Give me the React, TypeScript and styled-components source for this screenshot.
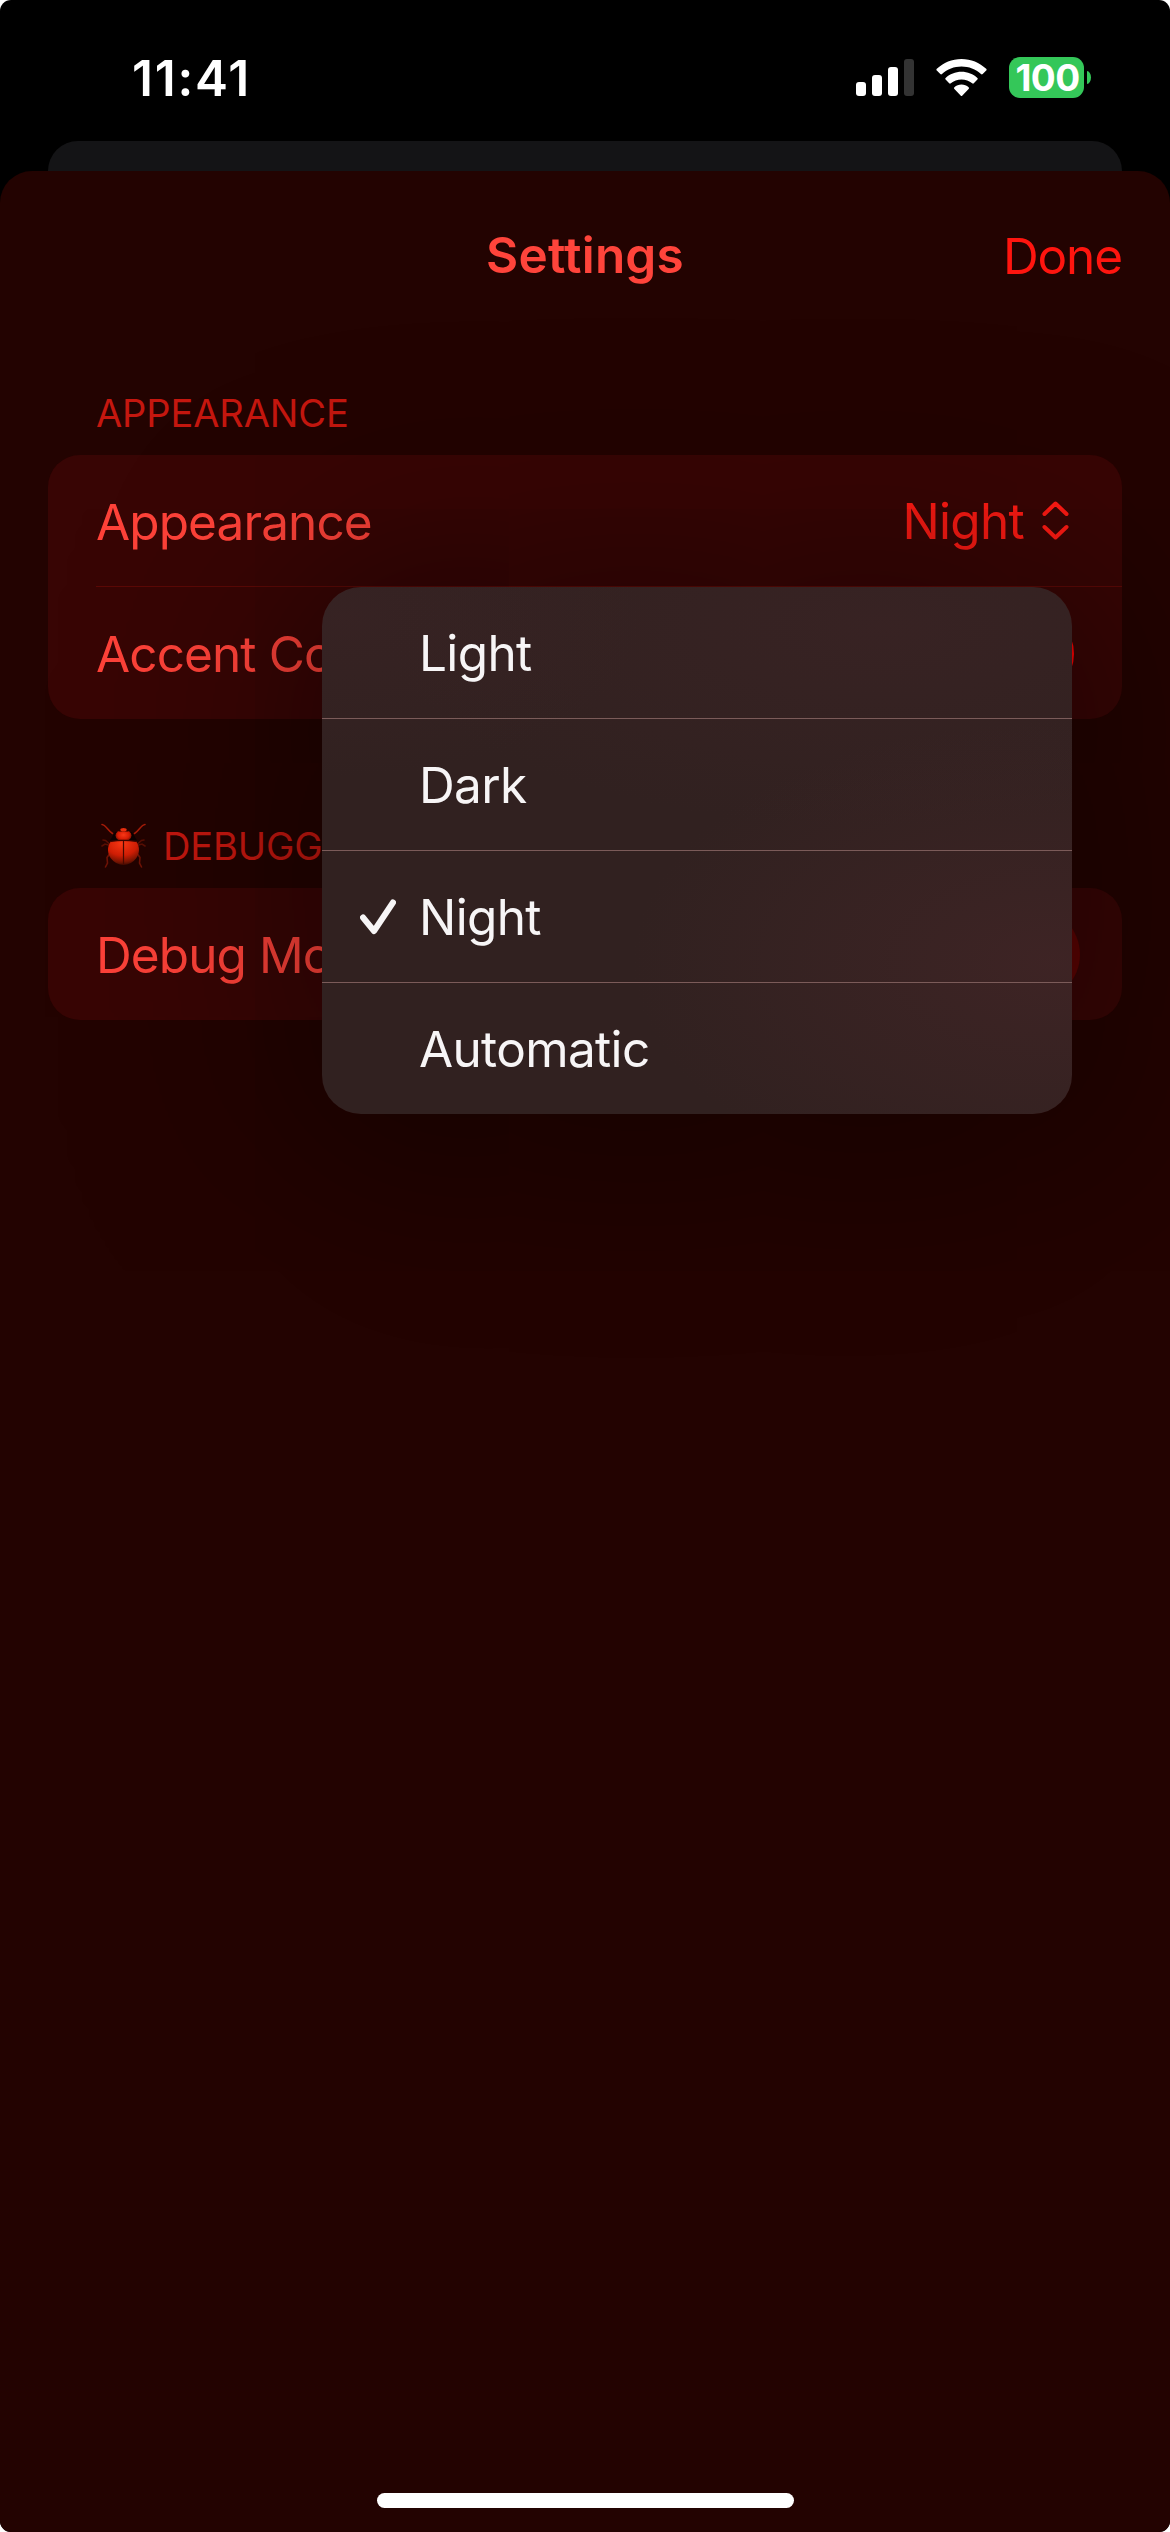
import React from 'react';
import styled, { createGlobalStyle } from 'styled-components';

const GlobalStyle = createGlobalStyle`
  *, *::before, *::after { box-sizing: border-box; }
  html, body { margin: 0; padding: 0; background: #ffffff; }
  body { font-family: Inter, "Liberation Sans", sans-serif; }
`;

const Screen = styled.div`
  position: relative;
  display: flex;
  flex-direction: column;
  width: 1170px;
  height: 2532px;
  overflow: hidden;
  border-radius: 11px;
  background: #000000;
`;

const StatusBar = styled.header`
  display: flex;
  flex: none;
  align-items: flex-start;
  justify-content: space-between;
  height: 141px;
  padding: 57px 79px 0 132px;
  color: #ffffff;
`;

const Clock = styled.time`
  font-size: 49.5px;
  font-weight: 600;
  line-height: 42px;
  letter-spacing: 1.8px;
`;

const StatusIcons = styled.div`
  display: flex;
  align-items: flex-start;
`;

const SignalIcon = styled.svg`
  margin: 2px 22px 0 0;
`;

const WifiIcon = styled.svg`
  margin: 2px 22px 0 0;
`;

const Battery = styled.div`
  display: flex;
  align-items: center;
  justify-content: center;
  width: 75px;
  height: 41px;
  padding-left: 2px;
  border-radius: 11px;
  background: #34c759;
  font-size: 37px;
  font-weight: 700;
  line-height: 41px;
  letter-spacing: -0.6px;
`;

const BatteryCap = styled.div`
  width: 4px;
  height: 13px;
  margin: 14px 0 0 3px;
  border-radius: 0 4px 4px 0 / 0 6.5px 6.5px 0;
  background: #34c759;
`;

const BackSheet = styled.div`
  flex: none;
  height: 30px;
  margin: 0 48px;
  border-radius: 30px 30px 0 0;
  background: #141416;
`;

const Sheet = styled.main`
  display: flex;
  flex: 1;
  flex-direction: column;
  border-radius: 32px 32px 0 0;
  background: #230301;
`;

const NavBar = styled.nav`
  display: grid;
  grid-template-columns: 1fr auto 1fr;
  align-items: center;
  height: 168px;
  padding: 0 48px;
`;

const NavTitle = styled.h1`
  grid-column: 2;
  margin: 0;
  color: #ff443b;
  font-size: 49.5px;
  font-weight: 600;
  line-height: 60px;
  letter-spacing: 0.2px;
`;

const NavButton = styled.button`
  justify-self: end;
  padding: 2px 0 0;
  border: 0;
  background: none;
  color: #ff150f;
  font: 400 49.5px/60px Inter, "Liberation Sans", sans-serif;
  letter-spacing: -1.1px;
`;

const Section = styled.section<{ $gap: number }>`
  display: flex;
  flex-direction: column;
  padding: ${(p) => p.$gap}px 48px 0;
`;

const SectionTitle = styled.h2`
  display: flex;
  align-items: center;
  height: 48px;
  margin: 0 0 18px;
  padding: 0 48px;
  color: #c5170f;
  font-size: 38px;
  font-weight: 400;
  line-height: 48px;
  letter-spacing: -0.1px;
`;

const BeetleIcon = styled.svg`
  flex: none;
  margin: 0 16px 0 5px;
`;

const Card = styled.div`
  overflow: hidden;
  border-radius: 32px;
  background: #380504;
`;

const Row = styled.div`
  display: flex;
  align-items: center;
  justify-content: space-between;
  height: 132px;
  margin-left: 48px;
  padding: 1px 48px 0 0;

  &:not(:last-child) {
    padding-top: 2px;
    border-bottom: 1px solid #5c0906;
  }
`;

const RowLabel = styled.span`
  color: #ff4239;
  font-size: 49.5px;
  line-height: 60px;
  letter-spacing: -0.9px;
`;

const Picker = styled.span`
  display: flex;
  align-items: center;
  gap: 18px;
  margin: -2px 5px 0 0;
  color: #ff1a13;
  font-size: 49.5px;
  line-height: 60px;
  letter-spacing: -0.7px;
`;

const ColorWell = styled.span`
  width: 84px;
  height: 84px;
  border: 9px solid #ff0000;
  border-radius: 50%;
  background: #a00000;
`;

const Toggle = styled.span`
  width: 153px;
  height: 93px;
  margin-right: -6px;
  border-radius: 47px;
  background: #5c0302;
`;

const Menu = styled.ul`
  position: absolute;
  top: 587px;
  left: 322px;
  width: 750px;
  margin: 0;
  padding: 0;
  overflow: hidden;
  list-style: none;
  border-radius: 39px;
  background:
    radial-gradient(ellipse 420px 240px at 730px 375px, rgba(72, 38, 40, 0.55), rgba(72, 38, 40, 0)),
    radial-gradient(ellipse 500px 200px at 560px 40px, rgba(62, 36, 38, 0.5), rgba(62, 36, 38, 0)),
    radial-gradient(ellipse 300px 160px at 20px 30px, rgba(60, 36, 38, 0.5), rgba(60, 36, 38, 0)),
    #312120;
`;

const MenuShadow = styled.div`
  position: absolute;
  top: 587px;
  left: 322px;
  width: 750px;
  height: 527px;
  border-radius: 39px;
  box-shadow: 0 8px 225px 30px rgba(0, 0, 0, 0.48);
`;

const MenuItem = styled.li`
  display: grid;
  grid-template-columns: 36px 1fr;
  column-gap: 23px;
  align-items: center;
  height: 132px;
  padding-left: 38px;
  border-bottom: 1px solid #7b5b59;
  color: #f7f5f6;
  font-size: 49.5px;
  line-height: 60px;
  letter-spacing: -0.65px;

  &:last-child {
    height: 131px;
    border-bottom: 0;
  }
`;

const MenuLabel = styled.span`
  grid-column: 2;
`;

const HomeIndicator = styled.div`
  align-self: center;
  width: 417px;
  height: 15px;
  margin: auto 0 24px;
  border-radius: 8px;
  background: #ffffff;
`;

const Beetle = () => (
  <BeetleIcon width="46" height="46" viewBox="0 0 46 46" fill="none">
    <defs>
      <radialGradient id="shell" cx="0.45" cy="0.12" r="0.9">
        <stop offset="0" stopColor="#ff3a14" />
        <stop offset="0.55" stopColor="#d41e05" />
        <stop offset="0.85" stopColor="#7a1503" />
        <stop offset="1" stopColor="#3a0a02" />
      </radialGradient>
      <radialGradient id="thorax" cx="0.5" cy="0.45" r="0.6">
        <stop offset="0" stopColor="#ff3a18" />
        <stop offset="0.6" stopColor="#dd1d05" />
        <stop offset="1" stopColor="#5a0d02" />
      </radialGradient>
    </defs>
    <g stroke="#a81c09" strokeWidth="1.600" strokeLinecap="round">
      <path d="M1 1.500C5 2 7 8 11.500 10.500M44 1.500C40 2 38 8 33.500 10.500" />
      <path d="M8 20.500 4.500 17.500 2 17M37 20.500 40.500 17.500 43 17" stroke="#5a0f04" />
      <path d="M7.500 22 4 21 1 23M37.500 22 41 21 44 23" stroke="#5a0f04" />
      <path d="M8.500 31 6 34.500 6.500 40 4.500 44M36.500 31 39 34.500 38.500 40 40.500 44" stroke="#701306" />
    </g>
    <path d="M14 9 9 17.500H36L31 9Z" fill="#0c0000" />
    <ellipse cx="22.500" cy="12.500" rx="8" ry="6" fill="url(#thorax)" />
    <path d="M16.500 7.500Q22.500 1 28.500 7.500L27 8.500H18Z" fill="#2a0401" />
    <ellipse cx="22.500" cy="6.800" rx="3.200" ry="1.800" fill="#f0300f" />
    <path d="M10 18.300Q22.500 16.500 35 18.300C39.500 24 38.500 31 35 35.500Q30 42 22.500 42Q15 42 10 35.500C6.500 31 5.500 24 10 18.300Z" fill="url(#shell)" />
    <path d="M22.500 18V42" stroke="#4a0a02" strokeWidth="1.200" />
    <path d="M10 18.300Q22.500 16.500 35 18.300" stroke="#3a0500" strokeWidth="1.200" />
  </BeetleIcon>
);

const Signal = () => (
  <SignalIcon width="58" height="37" viewBox="0 0 58 37" fill="#ffffff">
    <rect x="0" y="23" width="10" height="14" rx="3" />
    <rect x="16" y="16" width="10" height="21" rx="3" />
    <rect x="32" y="8" width="10" height="29" rx="3" />
    <rect x="48" y="0" width="10" height="37" rx="3" fill="#333333" />
  </SignalIcon>
);

const Wifi = () => (
  <WifiIcon width="51" height="37" viewBox="0 0 51 37" fill="#ffffff">
    <path d="M25.500 0C35 0 43.600 3.700 50.200 9.800a1.200 1.200 0 0 1 0 1.700L46.700 15.100a1.200 1.200 0 0 1-1.700 0C39.700 10.300 32.900 7.600 25.500 7.600S11.300 10.300 6 15.100a1.200 1.200 0 0 1-1.700 0L.8 11.500a1.200 1.200 0 0 1 0-1.700C7.400 3.700 16 0 25.500 0Z" />
    <path d="M25.500 12.800c6.100 0 11.700 2.300 15.900 6.100a1.200 1.200 0 0 1 0 1.700l-3.600 3.700a1.200 1.200 0 0 1-1.600 0c-2.900-2.500-6.600-3.900-10.700-3.900s-7.800 1.400-10.700 3.900a1.200 1.200 0 0 1-1.600 0l-3.600-3.700a1.200 1.200 0 0 1 0-1.700c4.200-3.800 9.800-6.100 15.900-6.100Z" />
    <path d="M25.500 25.600c2.700 0 5.200 1 7.100 2.600a1.200 1.200 0 0 1 0 1.700l-6.200 6.500a1.200 1.200 0 0 1-1.800 0l-6.200-6.500a1.200 1.200 0 0 1 0-1.700c1.900-1.600 4.400-2.600 7.100-2.600Z" />
  </WifiIcon>
);

const UpDownChevron = () => (
  <svg width="27" height="39" viewBox="0 0 27 39" fill="none" stroke="currentColor" strokeWidth="4" strokeLinecap="round" strokeLinejoin="round">
    <path d="M2.500 13 13.500 2.500 24.500 13M2.500 26 13.500 36.500 24.500 26" />
  </svg>
);

const Checkmark = () => (
  <svg width="36" height="36" viewBox="0 0 36 36" fill="none" stroke="currentColor" strokeWidth="6" strokeLinecap="round" strokeLinejoin="round">
    <path d="M3 18.500 14 32 33 3.500" />
  </svg>
);

const options = ['Light', 'Dark', 'Night', 'Automatic'];
const selected = 'Night';

export default function App() {
  return (
    <>
      <GlobalStyle />
      <Screen>
        <StatusBar>
          <Clock>11:41</Clock>
          <StatusIcons>
            <Signal />
            <Wifi />
            <Battery>100</Battery>
            <BatteryCap />
          </StatusIcons>
        </StatusBar>
        <BackSheet />
        <Sheet>
          <NavBar>
            <NavTitle>Settings</NavTitle>
            <NavButton>Done</NavButton>
          </NavBar>
          <Section $gap={50}>
            <SectionTitle>APPEARANCE</SectionTitle>
            <Card>
              <Row>
                <RowLabel>Appearance</RowLabel>
                <Picker>
                  {selected}
                  <UpDownChevron />
                </Picker>
              </Row>
              <Row>
                <RowLabel>Accent Color</RowLabel>
                <ColorWell />
              </Row>
            </Card>
          </Section>
          <Section $gap={103}>
            <SectionTitle>
              <Beetle />
              DEBUGGING
            </SectionTitle>
            <Card>
              <Row>
                <RowLabel>Debug Mode</RowLabel>
                <Toggle />
              </Row>
            </Card>
          </Section>
          <HomeIndicator />
        </Sheet>
        <MenuShadow />
        <Menu>
          {options.map((option) => (
            <MenuItem key={option}>
              {option === selected && <Checkmark />}
              <MenuLabel>{option}</MenuLabel>
            </MenuItem>
          ))}
        </Menu>
      </Screen>
    </>
  );
}
